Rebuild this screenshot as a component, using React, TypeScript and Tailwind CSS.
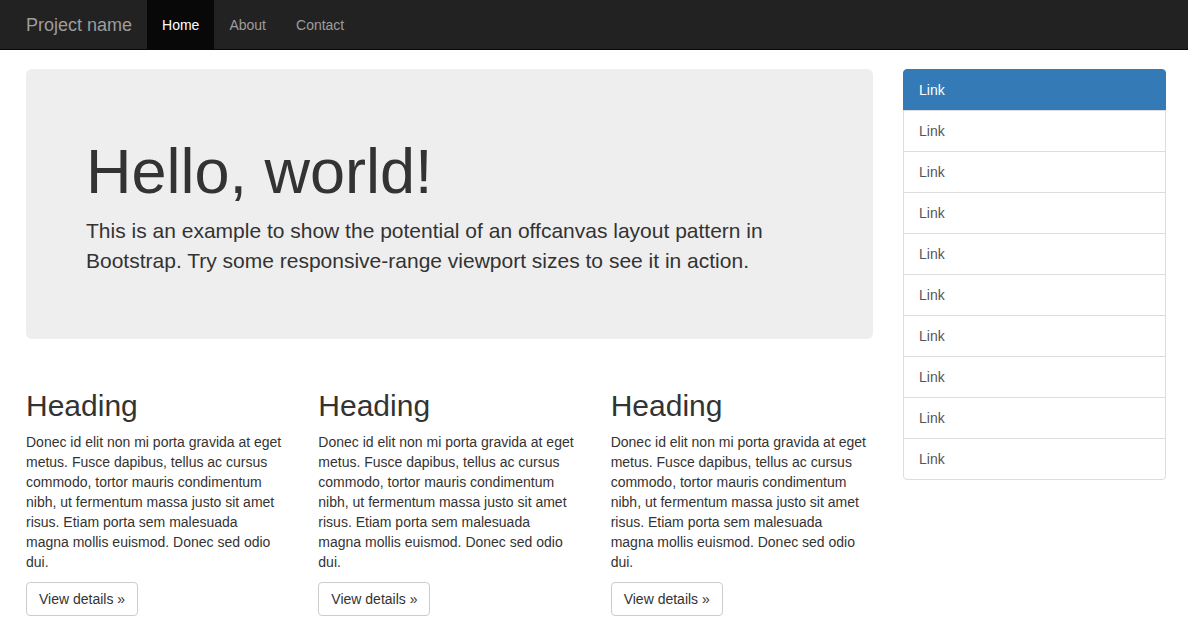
import React from "react";

const lines = [
  "Donec id elit non mi porta gravida at eget",
  "metus. Fusce dapibus, tellus ac cursus",
  "commodo, tortor mauris condimentum",
  "nibh, ut fermentum massa justo sit amet",
  "risus. Etiam porta sem malesuada",
  "magna mollis euismod. Donec sed odio",
  "dui.",
];

export default function App() {
  const links = Array.from({ length: 10 });
  return (
    <div
      className="min-h-[624px] bg-white text-[#333] text-[14px] leading-[20px]"
      style={{ fontFamily: '"Liberation Sans", Arial, Helvetica, sans-serif' }}
    >
      <nav className="h-[50px] bg-[#222] border-b border-[#080808] flex items-stretch pl-[11px]">
        <a className="px-[15px] flex items-center text-[18px] leading-[20px] text-[#9d9d9d]">
          Project name
        </a>
        <ul className="flex items-stretch">
          <li className="bg-[#080808] text-white px-[15px] flex items-center">Home</li>
          <li className="text-[#9d9d9d] px-[15px] flex items-center">About</li>
          <li className="text-[#9d9d9d] px-[15px] flex items-center">Contact</li>
        </ul>
      </nav>

      <div className="flex pl-[26px] pt-[19px] gap-[30px]">
        <div className="w-[847px]">
          <div className="bg-[#eee] rounded-[6px] px-[60px] pt-[48px] pb-[48px] mb-[30px]">
            <h1 className="mt-[20px] mb-[10px] text-[63px] leading-[1.1] font-normal">
              Hello, world!
            </h1>
            <p className="text-[21px] leading-[30px] mb-[15px]">
              This is an example to show the potential of an offcanvas layout pattern in
              Bootstrap. Try some responsive-range viewport sizes to see it in action.
            </p>
          </div>
          <div className="grid grid-cols-3 gap-x-[30px]">
            {[0, 1, 2].map((i) => (
              <div key={i}>
                <h2 className="mt-[20px] mb-[10px] text-[30px] leading-[33px] font-normal">
                  Heading
                </h2>
                <p className="mb-[10px]">
                  {lines.map((l, j) => (
                    <span key={j} className="block whitespace-nowrap">
                      {l}
                    </span>
                  ))}
                </p>
                <a className="inline-block px-[12px] py-[6px] border border-[#ccc] rounded-[4px] bg-white text-[#333]">
                  View details »
                </a>
              </div>
            ))}
          </div>
        </div>

        <div className="w-[263px]">
          <div className="flex flex-col">
            {links.map((_, i) => (
              <a
                key={i}
                className={
                  i === 0
                    ? "block px-[15px] py-[10px] bg-[#337ab7] border border-[#337ab7] text-white rounded-t-[4px]"
                    : i === links.length - 1
                    ? "block px-[15px] py-[10px] bg-white border border-[#ddd] -mt-px text-[#555] rounded-b-[4px]"
                    : "block px-[15px] py-[10px] bg-white border border-[#ddd] -mt-px text-[#555]"
                }
              >
                Link
              </a>
            ))}
          </div>
        </div>
      </div>
    </div>
  );
}
